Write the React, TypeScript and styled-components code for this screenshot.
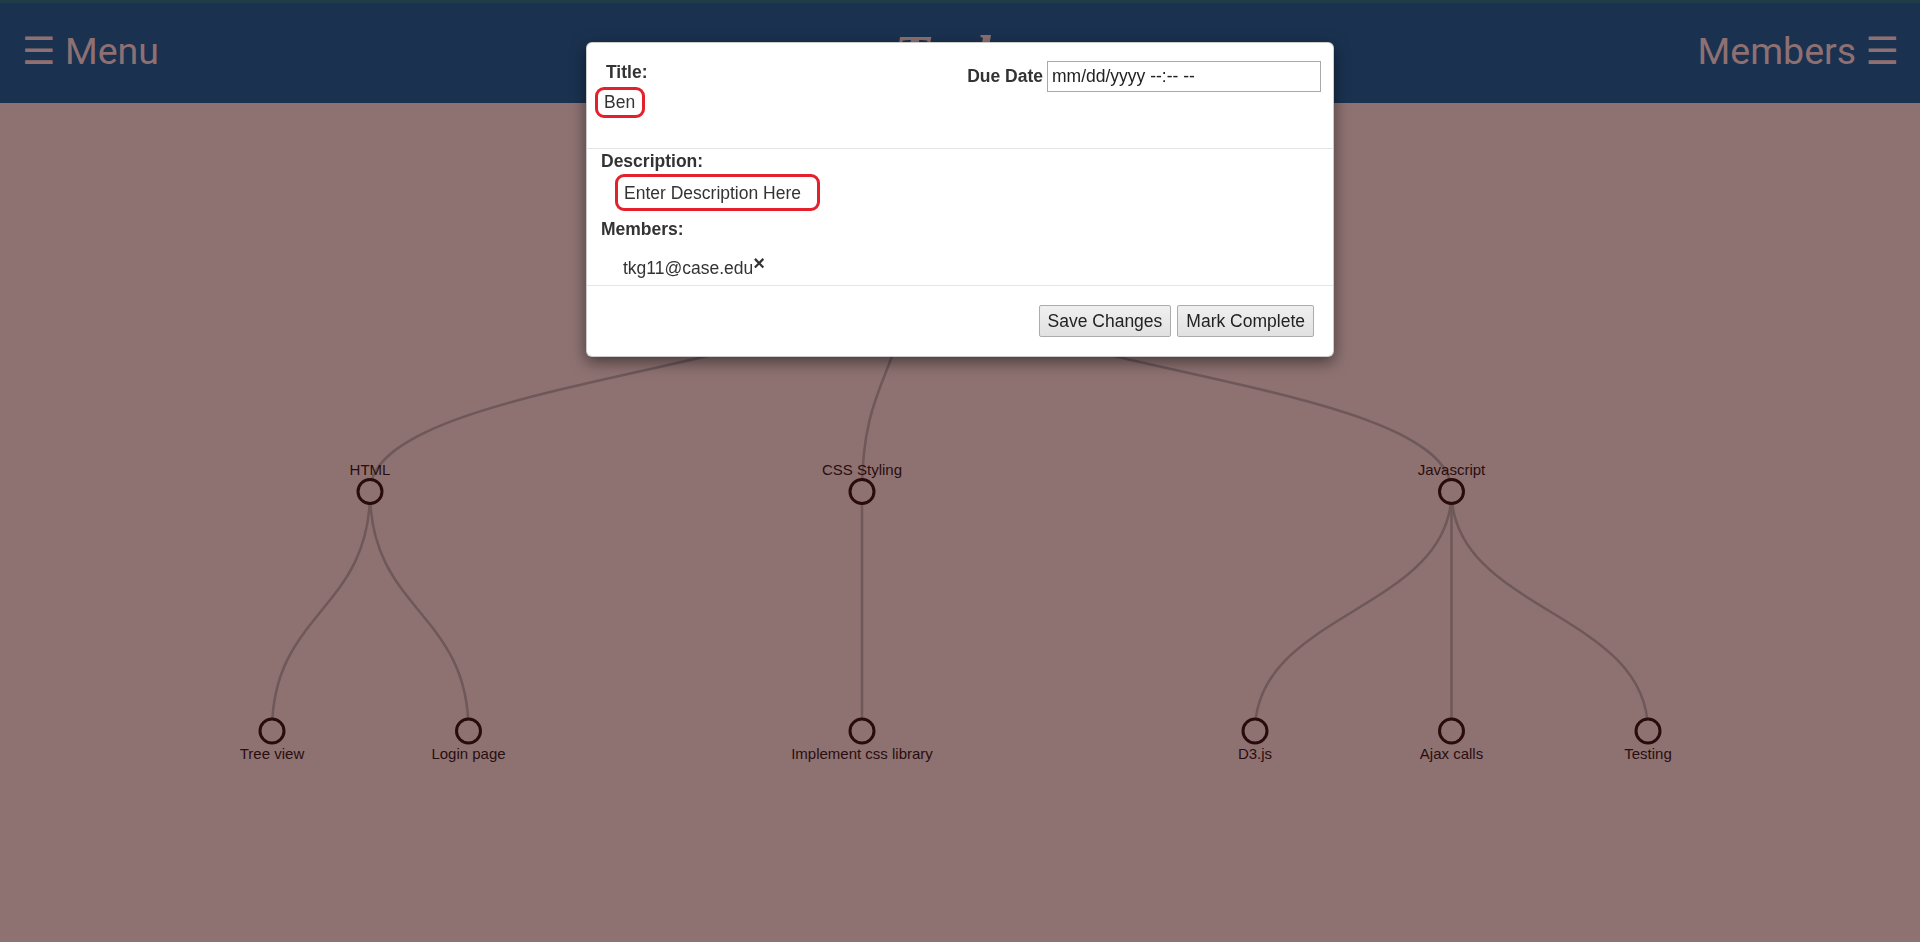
import React from "react";
import styled, { createGlobalStyle } from "styled-components";

const GlobalStyle = createGlobalStyle`
  html, body {
    margin: 0;
    padding: 0;
    height: 100%;
    overflow: hidden;
    background: #8e7272;
  }
  body {
    font-family: "Liberation Sans", Arial, sans-serif;
  }
  * { box-sizing: border-box; }
`;

const Page = styled.div`
  display: flex;
  flex-direction: column;
  height: 942px;
  background: #8e7272;
`;

const TopBar = styled.header`
  height: 103px;
  flex: 0 0 103px;
  background: #1a3250;
  border-top: 3px solid #1f3c48;
  display: grid;
  grid-template-columns: 1fr auto 1fr;
  align-items: center;
  padding: 0 21px 3px 22px;
`;

const NavToggle = styled.div<{ $align: "left" | "right" }>`
  font-family: Roboto, "DejaVu Sans", sans-serif;
  font-size: 37.5px;
  color: #8f7072;
  justify-self: ${(p) => (p.$align === "left" ? "start" : "end")};
  white-space: pre;
  line-height: 1;
`;

const Brand = styled.div`
  font-family: "Liberation Serif", serif;
  font-style: italic;
  font-weight: bold;
  font-size: 58px;
  color: #8f7072;
  line-height: 1;
  margin-top: 9px;
`;

const Canvas = styled.main`
  flex: 1;
  display: block;
`;

const TreeSvg = styled.svg`
  display: block;
  width: 1920px;
  height: 839px;
`;

const Overlay = styled.div`
  position: fixed;
  inset: 0;
  display: flex;
  justify-content: center;
  align-items: flex-start;
  padding-top: 42px;
`;

const Dialog = styled.div`
  width: 748px;
  background: #fff;
  border: 1px solid rgba(0, 0, 0, 0.2);
  border-radius: 6px;
  box-shadow: 0 5px 15px rgba(0, 0, 0, 0.5);
  color: #333;
  font-family: "Liberation Sans", Arial, sans-serif;
  font-size: 17.5px;
  line-height: 25px;
`;

const DialogHeader = styled.div`
  display: flex;
  justify-content: space-between;
  align-items: flex-start;
  padding: 17px 12px 30px 8px;
  border-bottom: 1px solid #e5e5e5;
`;

const TitleColumn = styled.div`
  display: flex;
  flex-direction: column;
  align-items: flex-start;
`;

const FieldLabel = styled.div<{ $indent?: number }>`
  font-weight: bold;
  margin-left: ${(p) => p.$indent ?? 0}px;
`;

const Editable = styled.div<{
  $padRight?: number;
  $padV?: number;
  $indent?: number;
  $gap?: number;
}>`
  border: 3px solid #e3202b;
  border-radius: 9px;
  padding: ${(p) => p.$padV ?? 0}px ${(p) => p.$padRight ?? 7}px
    ${(p) => p.$padV ?? 0}px 6px;
  margin-left: ${(p) => p.$indent ?? 0}px;
  margin-top: ${(p) => p.$gap ?? 2}px;
  line-height: ${(p) => (p.$padV ? 20 : 25)}px;
  color: #333;
`;

const DueRow = styled.div`
  display: flex;
  align-items: center;
  margin-top: 1px;
`;

const DueLabel = styled.span`
  font-weight: bold;
  margin-right: 4px;
`;

const DateBox = styled.input`
  width: 274px;
  height: 31px;
  border: 1px solid #a9a9a9;
  padding: 0 4px;
  font-family: "Liberation Sans", Arial, sans-serif;
  font-size: 17.5px;
  color: #222;
  background: #fff;
  outline: none;
`;

const DialogBody = styled.div`
  display: flex;
  flex-direction: column;
  align-items: flex-start;
  padding: 0 15px 4px 14px;
`;

const MembersLabel = styled(FieldLabel)`
  margin-top: 6px;
`;

const MemberRow = styled.div`
  margin-top: 14px;
  margin-left: 22px;
  display: flex;
  align-items: baseline;
`;

const RemoveMark = styled.span`
  font-weight: bold;
  font-size: 20px;
  line-height: 1;
  align-self: flex-start;
  margin-top: -3px;
`;

const DialogFooter = styled.div`
  display: flex;
  justify-content: flex-end;
  gap: 6px;
  padding: 19px 19px 19px;
  border-top: 1px solid #e5e5e5;
`;

const PlainButton = styled.button`
  height: 32px;
  padding: 0 8px;
  border: 1px solid #acacac;
  border-radius: 2px;
  background: linear-gradient(#f0f0f0, #e1e1e1);
  font-family: "Liberation Sans", Arial, sans-serif;
  font-size: 17.5px;
  color: #222;
`;

type Pt = { x: number; y: number };
const root: Pt = { x: 910.5, y: 148 };
const mids: (Pt & { name: string })[] = [
  { x: 370, y: 388.5, name: "HTML" },
  { x: 862, y: 388.5, name: "CSS Styling" },
  { x: 1451.5, y: 388.5, name: "Javascript" },
];
const leaves: (Pt & { name: string; parent: number })[] = [
  { x: 272, y: 628, name: "Tree view", parent: 0 },
  { x: 468.5, y: 628, name: "Login page", parent: 0 },
  { x: 862, y: 628, name: "Implement css library", parent: 1 },
  { x: 1255, y: 628, name: "D3.js", parent: 2 },
  { x: 1451.5, y: 628, name: "Ajax calls", parent: 2 },
  { x: 1648, y: 628, name: "Testing", parent: 2 },
];

const diag = (s: Pt, t: Pt) => {
  const my = (s.y + t.y) / 2;
  return `M${s.x},${s.y} C${s.x},${my} ${t.x},${my} ${t.x},${t.y}`;
};

const Link = styled.path`
  fill: none;
  stroke: #6e5859;
  stroke-width: 2.5;
`;

const Node = styled.circle`
  fill: #8e7272;
  stroke: #2a0b0c;
  stroke-width: 3;
`;

const Label = styled.text`
  font-family: "Liberation Sans", Arial, sans-serif;
  font-size: 15px;
  fill: #2a0d0e;
  text-anchor: middle;
`;

function Tree() {
  return (
    <TreeSvg viewBox="0 0 1920 839">
      {mids.map((m) => (
        <Link key={"l" + m.name} d={diag(root, m)} />
      ))}
      {leaves.map((l) => (
        <Link key={"l" + l.name} d={diag(mids[l.parent], l)} />
      ))}
      <Node cx={root.x} cy={root.y} r={12} />
      <Label x={root.x} y={root.y - 17}>Project</Label>
      {mids.map((m) => (
        <g key={m.name}>
          <Node cx={m.x} cy={m.y} r={12} />
          <Label x={m.x} y={m.y - 17}>
            {m.name}
          </Label>
        </g>
      ))}
      {leaves.map((l) => (
        <g key={l.name}>
          <Node cx={l.x} cy={l.y} r={12} />
          <Label x={l.x} y={l.y + 28}>
            {l.name}
          </Label>
        </g>
      ))}
    </TreeSvg>
  );
}

export default function App() {
  return (
    <>
      <GlobalStyle />
      <Page>
        <TopBar>
          <NavToggle $align="left">☰ Menu</NavToggle>
          <Brand>Tasks</Brand>
          <NavToggle $align="right">Members ☰</NavToggle>
        </TopBar>
        <Canvas>
          <Tree />
        </Canvas>
      </Page>
      <Overlay>
        <Dialog>
          <DialogHeader>
            <TitleColumn>
              <FieldLabel $indent={11}>Title:</FieldLabel>
              <Editable>Ben</Editable>
            </TitleColumn>
            <DueRow>
              <DueLabel>Due Date</DueLabel>
              <DateBox type="text" readOnly value="mm/dd/yyyy --:-- --" />
            </DueRow>
          </DialogHeader>
          <DialogBody>
            <FieldLabel>Description:</FieldLabel>
            <Editable $padV={5.5} $padRight={16} $indent={14} $gap={0}>
              Enter Description Here
            </Editable>
            <MembersLabel>Members:</MembersLabel>
            <MemberRow>
              tkg11@case.edu<RemoveMark>×</RemoveMark>
            </MemberRow>
          </DialogBody>
          <DialogFooter>
            <PlainButton>Save Changes</PlainButton>
            <PlainButton>Mark Complete</PlainButton>
          </DialogFooter>
        </Dialog>
      </Overlay>
    </>
  );
}
